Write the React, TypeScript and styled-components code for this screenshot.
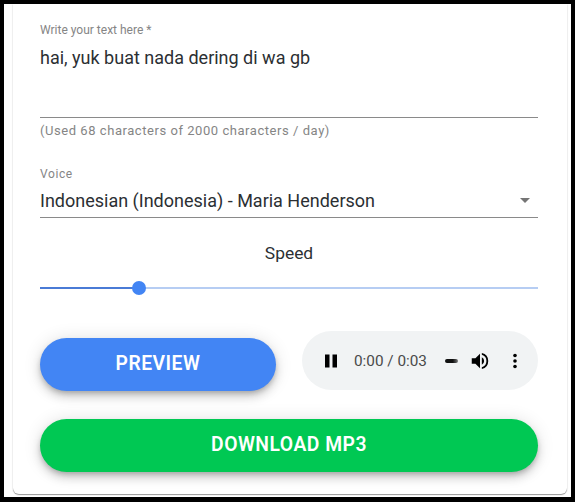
import styled, { createGlobalStyle } from "styled-components";

const GlobalStyle = createGlobalStyle`
  html, body {
    margin: 0;
    padding: 0;
    background: #000;
  }
  body {
    font-family: Roboto, "Liberation Sans", sans-serif;
  }
`;

const Frame = styled.div`
  box-sizing: border-box;
  width: 575px;
  height: 502px;
  padding: 4px 4px 5px 4px;
  background: #000;
`;

const Page = styled.div`
  box-sizing: border-box;
  height: 100%;
  background: #fff;
  padding: 0 4px 3px 9px;
`;

const Card = styled.div`
  box-sizing: border-box;
  height: 100%;
  background: #fff;
  border-radius: 0 0 6px 6px;
  box-shadow: 0 1px 1px rgba(0, 0, 0, 0.4), 0 0 2px rgba(0, 0, 0, 0.1);
  padding: 19px 29px 0 27px;
`;

const FieldLabel = styled.div<{ $spaced?: boolean }>`
  font-size: 12px;
  line-height: 14px;
  letter-spacing: ${(p) => (p.$spaced ? "0.6px" : "0")};
  color: #858585;
`;

const InputText = styled.div`
  height: 81px;
  padding-top: 9px;
  box-sizing: border-box;
  font-size: 18px;
  line-height: 24px;
  color: #2b2f33;
  border-bottom: 1px solid #8a8a8a;
`;

const Helper = styled.div`
  margin-top: 5px;
  font-size: 13px;
  line-height: 16px;
  letter-spacing: 0.55px;
  color: #858585;
`;

const VoiceField = styled.div`
  margin-top: 28px;
`;

const SelectRow = styled.div`
  display: flex;
  align-items: center;
  justify-content: space-between;
  height: 34px;
  padding-top: 2px;
  font-size: 18px;
  color: #2b2f33;
  border-bottom: 1px solid #8a8a8a;
`;

const Caret = styled.span`
  width: 0;
  height: 0;
  margin-right: 8px;
  border-left: 5.5px solid transparent;
  border-right: 5.5px solid transparent;
  border-top: 5.5px solid #757575;
`;

const SpeedLabel = styled.div`
  margin-top: 24px;
  text-align: center;
  font-size: 17.4px;
  line-height: 22px;
  color: #2b2f33;
`;

const Slider = styled.div`
  position: relative;
  margin-top: 17px;
  height: 14px;
  display: flex;
  align-items: center;
`;

const TrackFilled = styled.div<{ $percent: number }>`
  width: ${(p) => p.$percent}%;
  height: 2px;
  background: #4a7bd6;
`;

const TrackRest = styled.div`
  flex: 1;
  height: 2px;
  background: #b6cdf3;
`;

const Thumb = styled.div<{ $percent: number }>`
  position: absolute;
  left: ${(p) => p.$percent}%;
  top: 0;
  width: 14px;
  height: 14px;
  margin-left: -7px;
  border-radius: 50%;
  background: #4285f4;
`;

const ActionRow = styled.div`
  display: flex;
  align-items: flex-start;
  justify-content: space-between;
  margin-top: 36px;
`;

const PreviewSlot = styled.div`
  width: 236px;
  margin-top: 7px;
`;

const PillButton = styled.button<{ $color: string }>`
  display: block;
  box-sizing: border-box;
  width: 100%;
  height: 53px;
  padding: 0 0 2px;
  border: 0;
  border-radius: 27px;
  background: ${(p) => p.$color};
  color: #fff;
  font-family: inherit;
  font-size: 19.3px;
  font-weight: 600;
  letter-spacing: 0.5px;
  box-shadow: 0 3px 5px -1px rgba(0, 0, 0, 0.2), 0 6px 10px 0 rgba(0, 0, 0, 0.14),
    0 1px 18px 0 rgba(0, 0, 0, 0.12);
`;

const DownloadWrap = styled.div`
  margin-top: 28px;
`;

const AudioPlayer = styled.div`
  box-sizing: border-box;
  display: flex;
  align-items: center;
  width: 236px;
  height: 59px;
  padding-left: 22px;
  border-radius: 30px;
  background: #f1f3f4;
  color: #3b3b3b;
`;

const AudioTime = styled.span`
  margin-left: 16px;
  font-size: 15.3px;
  white-space: nowrap;
  color: #4a4a4a;
`;

const VolumeBar = styled.span`
  flex: none;
  width: 13px;
  height: 4px;
  margin-left: 18px;
  border-radius: 2px;
  background: linear-gradient(90deg, #111 60%, #777);
`;

const AudioIcon = styled.svg<{ $gap: number }>`
  margin-left: ${(p) => p.$gap}px;
  flex: none;
`;

export default function App() {
  const speed = 19.9;
  return (
    <>
      <GlobalStyle />
      <Frame>
        <Page>
          <Card>
            <FieldLabel>Write your text here *</FieldLabel>
            <InputText>hai, yuk buat nada dering di wa gb</InputText>
            <Helper>(Used 68 characters of 2000 characters / day)</Helper>
            <VoiceField>
              <FieldLabel $spaced>Voice</FieldLabel>
              <SelectRow>
                Indonesian (Indonesia) - Maria Henderson
                <Caret />
              </SelectRow>
            </VoiceField>
            <SpeedLabel>Speed</SpeedLabel>
            <Slider>
              <TrackFilled $percent={speed} />
              <TrackRest />
              <Thumb $percent={speed} />
            </Slider>
            <ActionRow>
              <PreviewSlot>
                <PillButton $color="#4285f4">PREVIEW</PillButton>
              </PreviewSlot>
              <AudioPlayer>
                <AudioIcon $gap={0} width="14" height="14" viewBox="0 0 14 14">
                  <path d="M1 0.5h4.5v13h-4.5zM8.5 0.5h4.5v13h-4.5z" fill="#000" />
                </AudioIcon>
                <AudioTime>0:00 / 0:03</AudioTime>
                <VolumeBar />
                <AudioIcon $gap={11} width="22" height="22" viewBox="0 0 24 24">
                  <path
                    d="M3 9v6h4l5 5V4L7 9H3zm13.5 3A4.5 4.5 0 0 0 14 7.97v8.05A4.5 4.5 0 0 0 16.5 12zM14 3.23v2.06a7 7 0 0 1 0 13.42v2.06a9 9 0 0 0 0-17.54z"
                    fill="#000"
                  />
                </AudioIcon>
                <AudioIcon $gap={22} width="4" height="16" viewBox="0 0 4 16">
                  <circle cx="2" cy="2.5" r="1.8" fill="#000" />
                  <circle cx="2" cy="8" r="1.8" fill="#000" />
                  <circle cx="2" cy="13.5" r="1.8" fill="#000" />
                </AudioIcon>
              </AudioPlayer>
            </ActionRow>
            <DownloadWrap>
              <PillButton $color="#00c853">DOWNLOAD MP3</PillButton>
            </DownloadWrap>
          </Card>
        </Page>
      </Frame>
    </>
  );
}
